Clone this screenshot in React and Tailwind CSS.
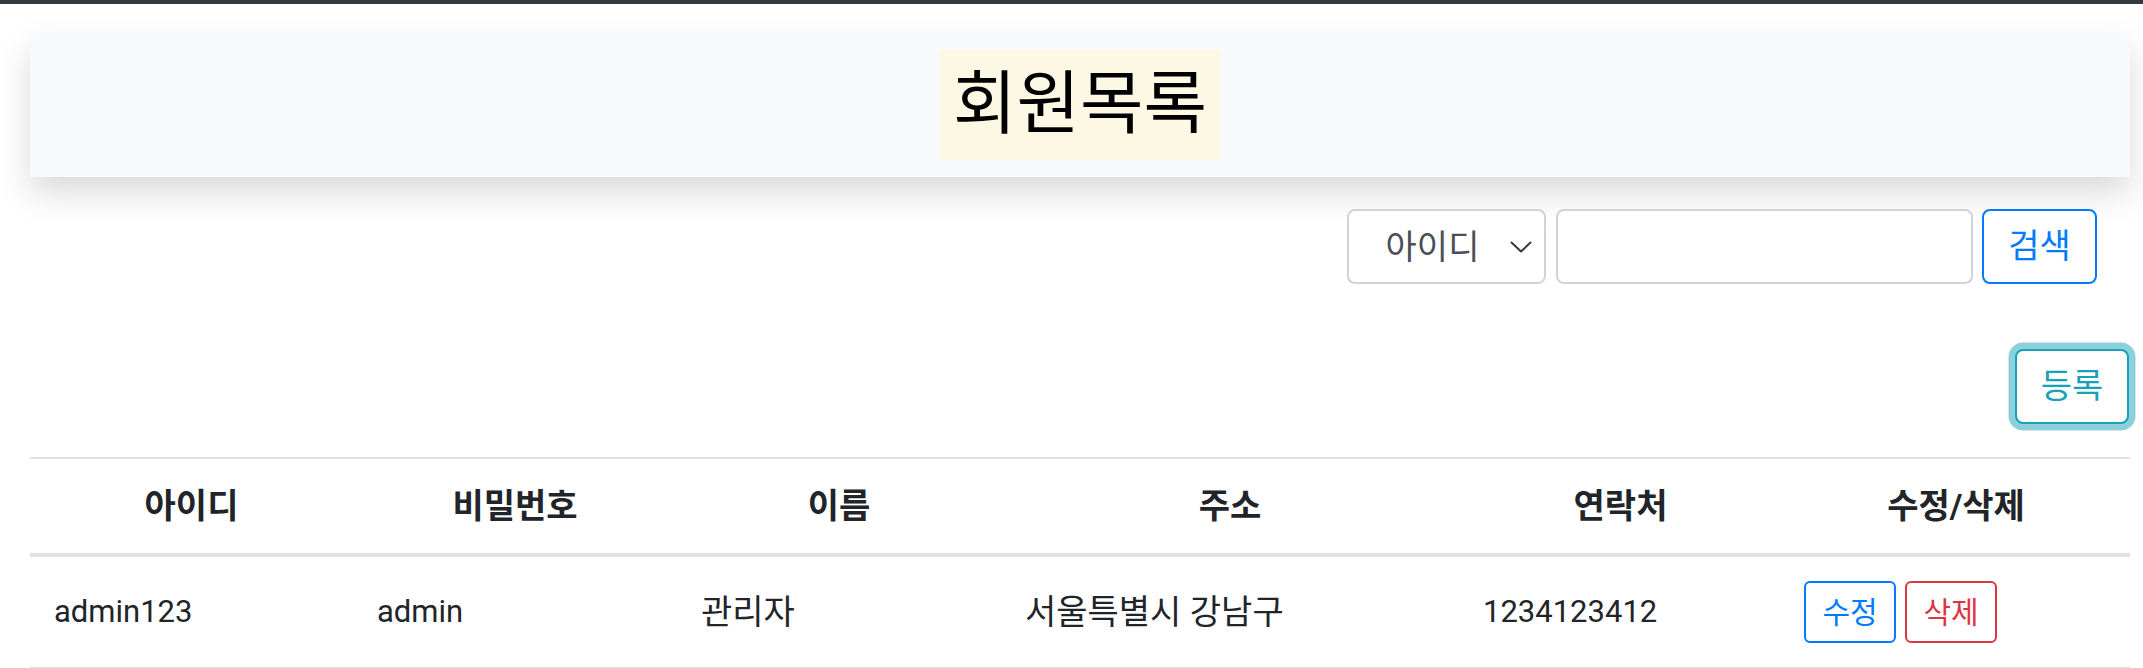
import React, { useState } from 'react';

const members = [
  { id: 'admin123', pw: 'admin', name: '관리자', addr: '서울특별시 강남구', tel: '1234123412' },
];

function MemberList() {
  const [field, setField] = useState('아이디');
  const [keyword, setKeyword] = useState('');

  return (
    <div className="min-h-screen bg-white font-['Roboto','Noto_Sans_CJK_KR',sans-serif] text-[32px] text-[#212529]">
      {/* ===== Top Bar ===== */}
      <div className="h-[4px] bg-[#343a40]" />

      <div className="pl-[30px] pr-[13px] pt-[29px]">
        {/* ===== Title ===== */}
        <div className="flex justify-center bg-[#f8f9fa] py-[17px] shadow-[0_16px_32px_rgba(0,0,0,0.15)]">
          <h2 className="text-[69px] font-normal leading-[110px] text-black">
            <mark className="inline-block h-[110px] bg-[#fcf8e3] px-[13px] text-black">회원목록</mark>
          </h2>
        </div>

        {/* ===== Search ===== */}
        <div className="mt-[32px] mr-[33px] flex h-[75px] justify-end">
          <div className="flex w-[199px] items-center rounded-[8px] border-2 border-[#ced4da] bg-white pl-[14px] pr-[12px] text-[34px] text-[#495057]">
            <span className="flex-1 text-center leading-[48px]">{field}</span>
            <svg width="22" height="12" viewBox="0 0 22 12" fill="none" className="ml-[8px]">
              <path d="M1.5 1.5 L11 10.5 L20.5 1.5" stroke="#343a40" strokeWidth="2" strokeLinecap="round" strokeLinejoin="round" />
            </svg>
          </div>
          <input
            value={keyword}
            onChange={(e) => setKeyword(e.target.value)}
            className="ml-[10px] w-[417px] rounded-[8px] border-2 border-[#ced4da] bg-white px-[24px] outline-none"
          />
          <button
            onClick={() => setField('아이디')}
            className="ml-[9px] w-[115px] rounded-[8px] border-2 border-[#007bff] bg-white text-[34px] text-[#007bff]"
          >
            검색
          </button>
        </div>

        {/* ===== Register ===== */}
        <div className="mt-[65px] flex justify-end pr-[1px]">
          <button className="h-[75px] w-[114px] rounded-[8px] border-2 border-[#17a2b8] bg-white text-[34px] text-[#17a2b8] shadow-[0_0_0_6.5px_rgba(23,162,184,0.5)]">
            등록
          </button>
        </div>

        {/* ===== Member Table ===== */}
        <table className="mt-[33px] w-full table-fixed border-collapse border-t-2 border-[#dee2e6]">
          <colgroup>
            <col className="w-[323px]" />
            <col className="w-[324px]" />
            <col className="w-[324px]" />
            <col className="w-[458px]" />
            <col className="w-[323px]" />
            <col />
          </colgroup>
          <thead>
            <tr>
              {['아이디', '비밀번호', '이름', '주소', '연락처', '수정/삭제'].map((h) => (
                <th key={h} className="border-b-4 border-[#dee2e6] px-[24px] py-[23px] text-center text-[34px] font-bold leading-[48px]">
                  {h}
                </th>
              ))}
            </tr>
          </thead>
          <tbody>
            {members.map((m) => (
              <tr key={m.id}>
                <td className="border-b-2 border-[#dee2e6] px-[24px] py-[24px] align-middle text-[31px] leading-[48px]">{m.id}</td>
                <td className="border-b-2 border-[#dee2e6] px-[24px] py-[24px] align-middle text-[31px] leading-[48px]">{m.pw}</td>
                <td className="border-b-2 border-[#dee2e6] px-[24px] py-[24px] align-middle text-[34px] leading-[48px]">{m.name}</td>
                <td className="border-b-2 border-[#dee2e6] px-[24px] py-[24px] align-middle text-[34px] leading-[48px]">{m.addr}</td>
                <td className="border-b-2 border-[#dee2e6] px-[24px] py-[24px] align-middle text-[31px] leading-[48px]">{m.tel}</td>
                <td className="border-b-2 border-[#dee2e6] px-[22px] py-[24px] align-middle">
                  <div className="flex gap-[9px]">
                    <button className="h-[62px] w-[92px] rounded-[6px] border-2 border-[#007bff] text-[30px] text-[#007bff]">수정</button>
                    <button className="h-[62px] w-[92px] rounded-[6px] border-2 border-[#dc3545] text-[30px] text-[#dc3545]">삭제</button>
                  </div>
                </td>
              </tr>
            ))}
          </tbody>
        </table>
      </div>
    </div>
  );
}

export default MemberList;
